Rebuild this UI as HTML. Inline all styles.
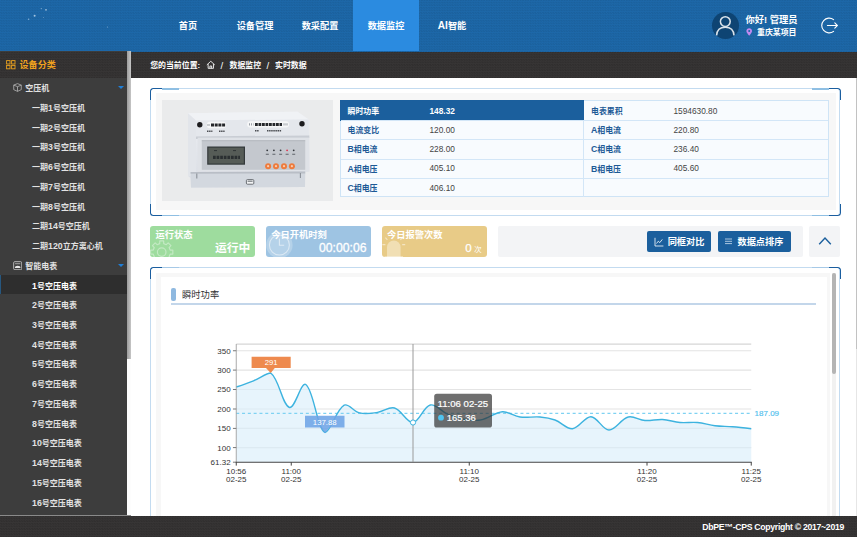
<!DOCTYPE html>
<html lang="zh">
<head>
<meta charset="utf-8">
<title>数据监控</title>
<style>
*{box-sizing:border-box;margin:0;padding:0}
html,body{width:857px;height:537px;overflow:hidden;background:#fff}
body{position:relative;font-family:"Liberation Sans","Noto Sans CJK SC",sans-serif;font-size:8px;color:#333;line-height:1}
.abs{position:absolute}
.dots{background-image:conic-gradient(rgba(0,0,0,.13) 25%,transparent 0 50%,rgba(0,0,0,.13) 0 75%,transparent 0);background-size:2.6px 2.6px}
.dots2{background-image:conic-gradient(rgba(0,0,0,.07) 25%,transparent 0 50%,rgba(0,0,0,.07) 0 75%,transparent 0);background-size:2.6px 2.6px}
/* header */
#hdr{left:0;top:0;width:857px;height:51.6px;background-color:#1d68a9}
.nav{top:0;height:51px;line-height:52.6px;text-align:center;color:#fff;font-size:9.2px;font-weight:700}
.nav.on{background:#2b8be0}
/* sidebar */
#side{left:0;top:51px;width:127px;height:465.2px;background:#3d3d3d}
#sideh{left:0;top:51.5px;width:127px;height:26px;background-color:#373535}
#sbar{left:127px;top:51px;width:4px;height:466px;background:#fdfdfd}
#sthumb{left:127px;top:51px;width:3.8px;height:308px;background:linear-gradient(90deg,#9c9c9c,#c6c6c6)}
.si{left:0;width:127px;height:19.75px;line-height:23.4px;color:#e2e2e2;font-size:8px;font-weight:700;white-space:nowrap}
.si.l2{padding-left:32px}
.si.l1{padding-left:25.2px;line-height:24.8px}
.si.on{background:#2e2e2e;color:#fff;box-shadow:inset 1px 0 0 #27577f}
.tri{width:0;height:0;border-left:3px solid transparent;border-right:3px solid transparent;border-top:3.4px solid #1f7fd8}
.L{font-size:1.1em;line-height:0}
/* breadcrumb */
#bc{left:131px;top:51.5px;width:726px;height:26px;background-color:#373535;color:#fff;font-size:7.9px;font-weight:700;line-height:27.6px;white-space:nowrap}

/* panels */
.panel{border:1px solid #c3dbf0;border-radius:3px;background:#fff}
.cn{width:12.4px;height:12px;border:0 solid #1b5e9f}
.cn.tl{border-top-width:1.8px;border-left-width:1.8px;border-top-left-radius:3.5px}
.cn.tr{border-top-width:1.8px;border-right-width:1.8px;border-top-right-radius:3.5px}
.cn.bl{border-bottom-width:1.8px;border-left-width:1.8px;border-bottom-left-radius:3.5px}
.cn.br{border-bottom-width:1.8px;border-right-width:1.8px;border-bottom-right-radius:3.5px}
.md{height:1.7px;width:17px;background:#8fbfe3}
.inner{background:#f7f7f7}
/* table */
#tb{left:340px;top:100px;width:489px;height:97.3px;background:#f8fbfe;border:1px solid #cfe4f6}
.rw{left:0;width:487px;height:1px;background:#d3e6f7}
.tc{font-size:7.9px;line-height:22.2px;height:19.4px;white-space:nowrap}
.tl1{color:#1d5a96;font-weight:700}
.tv{color:#444;font-size:8.3px;margin-top:-1.1px}
/* cards */
.card{top:225.5px;height:31.5px;border-radius:3px;color:#fff;overflow:hidden}
.card .t{position:absolute;left:5.2px;top:5.1px;font-size:9.25px;font-weight:700;white-space:nowrap}
.card .v{position:absolute;right:5.2px;bottom:2.2px;font-size:11.8px;white-space:nowrap}
.btn{top:231px;height:20.5px;background:#1b5f9d;border-radius:2px;color:#fff;font-size:9.2px;font-weight:700;line-height:22px;white-space:nowrap}
/* footer */
#ft{left:0;top:516.2px;width:857px;height:20.8px;background-color:#373535;color:#fff;font-size:8.7px;letter-spacing:-.3px;font-weight:700;line-height:22.4px;text-align:right;padding-right:13px}
</style>
</head>
<body>
<div id="hdr" class="abs dots2"></div>
<svg class="abs" style="left:0;top:0" width="140" height="51" viewBox="0 0 140 51" fill="#cfe3f5"><circle cx="41.3" cy="8.6" r=".7" opacity=".5"/><circle cx="46" cy="9.8" r=".9" opacity=".7"/><circle cx="34.6" cy="15.7" r="1" opacity=".75"/><circle cx="28.6" cy="19.2" r=".8" opacity=".55"/><circle cx="43.4" cy="17.4" r=".5" opacity=".4"/><circle cx="107.5" cy="27" r=".6" opacity=".5"/></svg>
<div class="abs nav" style="left:160px;width:56px">首页</div>
<div class="abs nav" style="left:222px;width:66px">设备管理</div>
<div class="abs nav" style="left:287px;width:66px">数采配置</div>
<div class="abs nav on" style="left:353px;width:66px">数据监控</div>
<div class="abs nav" style="left:419px;width:66px"><span class="L">AI</span>智能</div>

<div class="abs" style="left:712.3px;top:12.2px;width:26.6px;height:26.6px;border-radius:50%;background:#0e4473"></div>
<svg class="abs" style="left:712.3px;top:12.2px" width="26.6" height="26.6" viewBox="0 0 26.6 26.6" fill="none" stroke="#d9e2ea" stroke-width="1.5"><circle cx="13.3" cy="9.6" r="4.9"/><path d="M4.6 23.4C4.9 17.6 8.8 15.2 13.3 15.2C17.8 15.2 21.7 17.6 22 23.4"/></svg>
<div class="abs" style="left:745.5px;top:15.3px;font-size:9.3px;font-weight:700;color:#fff;white-space:nowrap;line-height:10px">你好! 管理员</div>
<div class="abs" style="left:757px;top:29.3px;font-size:7.9px;font-weight:700;color:#fff;white-space:nowrap;line-height:8px">重庆某项目</div>
<svg class="abs" style="left:745.8px;top:28.4px" width="6.4" height="8" viewBox="0 0 6.4 8"><path d="M3.2 0.3C1.5 0.3 0.4 1.5 0.4 3C0.4 4.8 3.2 7.7 3.2 7.7C3.2 7.7 6 4.8 6 3C6 1.5 4.9 0.3 3.2 0.3Z" fill="#c28af0"/><circle cx="3.2" cy="2.9" r="1" fill="#1c65a6"/></svg>
<svg class="abs" style="left:820px;top:16px" width="19" height="19" viewBox="0 0 19 19" fill="none" stroke="#fff" stroke-width="1.1" stroke-linecap="round"><path d="M13.6 3.6A7.4 7.4 0 1 0 13.6 15.4"/><path d="M7.4 9.5H17.4M14.8 6.9L17.4 9.5L14.8 12.1"/></svg>
<div id="side" class="abs"></div>
<div id="sideh" class="abs dots"></div>
<div class="abs si l1" style="top:77.30px">空压机</div>
<div class="abs si l2" style="top:97.03px">一期<span class="L">1</span>号空压机</div>
<div class="abs si l2" style="top:116.75px">一期<span class="L">2</span>号空压机</div>
<div class="abs si l2" style="top:136.47px">一期<span class="L">3</span>号空压机</div>
<div class="abs si l2" style="top:156.20px">一期<span class="L">6</span>号空压机</div>
<div class="abs si l2" style="top:175.93px">一期<span class="L">7</span>号空压机</div>
<div class="abs si l2" style="top:195.65px">一期<span class="L">8</span>号空压机</div>
<div class="abs si l2" style="top:215.38px">二期<span class="L">14</span>号空压机</div>
<div class="abs si l2" style="top:235.10px">二期<span class="L">120</span>立方离心机</div>
<div class="abs si l1" style="top:254.82px">智能电表</div>
<div class="abs si l2 on" style="top:274.55px"><span class="L">1</span>号空压电表</div>
<div class="abs si l2" style="top:294.28px"><span class="L">2</span>号空压电表</div>
<div class="abs si l2" style="top:314.00px"><span class="L">3</span>号空压电表</div>
<div class="abs si l2" style="top:333.73px"><span class="L">4</span>号空压电表</div>
<div class="abs si l2" style="top:353.45px"><span class="L">5</span>号空压电表</div>
<div class="abs si l2" style="top:373.18px"><span class="L">6</span>号空压电表</div>
<div class="abs si l2" style="top:392.90px"><span class="L">7</span>号空压电表</div>
<div class="abs si l2" style="top:412.63px"><span class="L">8</span>号空压电表</div>
<div class="abs si l2" style="top:432.35px"><span class="L">10</span>号空压电表</div>
<div class="abs si l2" style="top:452.08px"><span class="L">14</span>号空压电表</div>
<div class="abs si l2" style="top:471.80px"><span class="L">15</span>号空压电表</div>
<div class="abs si l2" style="top:491.53px"><span class="L">16</span>号空压电表</div>
<div class="abs" style="left:19.5px;top:51px;height:27px;line-height:29.6px;font-size:9.1px;font-weight:700;color:#f0a21e">设备分类</div>
<svg class="abs" style="left:6px;top:60px" width="10" height="10" viewBox="0 0 10 10" fill="none" stroke="#e9a11f" stroke-width="0.9"><rect x="0.6" y="0.6" width="3.4" height="3.4"/><rect x="5.6" y="0.6" width="3.4" height="3.4"/><rect x="0.6" y="5.4" width="3.4" height="3.4"/><rect x="5.6" y="5.4" width="3.4" height="3.4"/></svg>
<svg class="abs" style="left:12.8px;top:82.9px" width="9" height="9" viewBox="0 0 10 10" fill="none" stroke="#b9b9b9" stroke-width="0.85" stroke-linejoin="round"><path d="M5 0.7L9.2 2.3V7.4L5 9.3L0.8 7.4V2.3ZM0.8 2.3L5 4.1L9.2 2.3M5 4.1V9.3"/></svg>
<svg class="abs" style="left:12.6px;top:260.6px" width="9.4" height="9.4" viewBox="0 0 10 10" fill="none" stroke="#c9c9c9" stroke-width="0.9"><rect x="0.7" y="0.7" width="8.6" height="8.6" rx="1.2"/><path d="M2.2 2.9H7.8" stroke-width="0.8"/><path d="M2 7.4A3 2.3 0 0 1 8 7.4Z" fill="#e6e6e6" stroke="none"/></svg>
<div class="abs tri" style="left:117.5px;top:86px"></div>
<div class="abs tri" style="left:117.5px;top:263.7px"></div>
<div id="sbar" class="abs"></div>
<div class="abs" style="left:0;top:515.4px;width:131px;height:1px;background:#8a8a8a"></div>
<div id="sthumb" class="abs"></div>
<div id="bc" class="abs dots"><span style="margin-left:19.2px">您的当前位置:</span>
<svg style="position:absolute;left:75.3px;top:8.8px" width="9.6" height="9.6" viewBox="0 0 9 9" fill="none" stroke="#fff" stroke-width="0.8"><path d="M0.8 4.6 L4.5 1.2 L8.2 4.6 M2 3.8 V7.8 H7 V3.8 M3.7 7.8 V5.6 H5.3 V7.8"/></svg>
<span style="position:absolute;left:89.6px;font-size:9.6px;font-weight:400">/</span><span style="position:absolute;left:98.5px">数据监控</span><span style="position:absolute;left:135.4px;font-size:9.6px;font-weight:400">/</span><span style="position:absolute;left:144px">实时数据</span></div>


<!-- panel 1 -->
<div class="abs panel" style="left:150.2px;top:88.2px;width:690.3px;height:127.5px"></div>
<div class="abs cn tl" style="left:149.7px;top:87.7px"></div><div class="abs md" style="left:162px;top:87.9px"></div>
<div class="abs cn tr" style="left:828.7px;top:87.7px"></div><div class="abs md" style="left:811.7px;top:87.9px"></div>
<div class="abs cn bl" style="left:149.7px;top:204.2px"></div><div class="abs md" style="left:162px;top:214.6px"></div>
<div class="abs cn br" style="left:828.7px;top:204.2px"></div><div class="abs md" style="left:811.7px;top:214.6px"></div>
<div class="abs inner" style="left:156px;top:93.4px;width:679.7px;height:116.6px"></div>
<div class="abs" style="left:162px;top:100px;width:170.8px;height:100.5px;background:#eaebec"></div>
<svg class="abs" style="left:162px;top:100px" width="172" height="100.5" viewBox="162 100 172 100.5">
<defs><linearGradient id="g1" x1="0" y1="0" x2="0" y2="1"><stop offset="0" stop-color="#eef0f4"/><stop offset="1" stop-color="#d9dde4"/></linearGradient></defs>
<path d="M188 113.2 L297.5 111.8 L308.6 119.4 L309.4 137 L309.4 171.5 L305.2 172 L305 187 L191 187.4 L190.6 178 L188 176 Z" fill="url(#g1)"/>
<path d="M188 113.2 L297.5 111.8 L308.6 119.4 L196 120.4 Z" fill="#f0f2f5"/>
<path d="M188 113.2 L196 120.4 L196 176 L188 176 Z" fill="#e2e5ea"/>
<path d="M196 120.4 L308.6 119.4 L309 136.6 L196 137.6 Z" fill="#e4e7ec"/>
<path d="M196 136.4 L309.3 135.4 L309.3 138 L196 139 Z" fill="#c9cdd4"/>
<rect x="197.6" y="137.6" width="111.6" height="34" fill="#dfe2e7"/>
<rect x="201.8" y="140.2" width="103.4" height="29.6" fill="#c4c8ce"/>
<path d="M201.8 140.2H305.2V141.2H201.8Z" fill="#b3b7be"/>
<rect x="207.2" y="146.5" width="37.8" height="18.2" fill="#33383a"/>
<rect x="208.4" y="147.7" width="35.4" height="15.8" fill="#565c57"/>
<path d="M213 157.4H240" stroke="#2a2f31" stroke-width="3.4" stroke-dasharray="2.7 .9"/>
<path d="M214 150.6H217M233 150.6H236" stroke="#2f3436" stroke-width="1"/>
<path d="M190.6 172 L305.2 171.6 L305 187 L191 187.4 Z" fill="#d3d8df"/>
<path d="M190.6 172 L305.2 171.6 L305.2 173.4 L190.6 173.8Z" fill="#b9bec6"/>
<circle cx="199.8" cy="124.8" r="2.7" fill="#1c1c1e"/><circle cx="302" cy="123.8" r="2.7" fill="#1c1c1e"/>
<rect x="206.8" y="121.8" width="19.4" height="6.4" rx="3" fill="#f6f7f8"/>
<rect x="247.2" y="121.2" width="41.8" height="6.4" rx="3" fill="#f6f7f8"/>
<path d="M211 125H225.4" stroke="#25272b" stroke-width="3" stroke-dasharray="3 .7"/>
<path d="M255 124.4H282" stroke="#25272b" stroke-width="3" stroke-dasharray="2.8 .7"/>
<path d="M207.5 125H210M249 124.4H253.5M283.5 124.4H288" stroke="#9ca1a8" stroke-width="2.2" stroke-dasharray="1 1"/>
<path d="M207 131.2H212.4M219 131.2H224.6M255 130.8H259M267 130.8H281.6" stroke="#4a4d52" stroke-width="1.5" stroke-dasharray="1.5 .6"/>
<g fill="#34373c"><circle cx="267.2" cy="150.3" r=".9"/><circle cx="273.9" cy="150.3" r=".9"/><circle cx="280.6" cy="150.3" r=".9"/><circle cx="287.1" cy="150.3" r=".9" fill="#e2304c"/><circle cx="293.7" cy="150.3" r=".9"/></g>
<path d="M265.8 154.2H268.8M272.4 154.2H275.4M279.1 154.2H282.1M285.6 154.2H288.6M292.2 154.2H295.2" stroke="#5f646b" stroke-width="1.1"/>
<g fill="#ee7b3c"><circle cx="268.1" cy="166.2" r="3"/><circle cx="276" cy="166.2" r="3"/><circle cx="284" cy="166.2" r="3"/><circle cx="291.9" cy="166.2" r="3"/></g>
<g fill="#f9cdb0"><circle cx="268.1" cy="166.2" r="1.1"/><circle cx="276" cy="166.2" r="1.1"/><circle cx="284" cy="166.2" r="1.1"/><circle cx="291.9" cy="166.2" r="1.1"/></g>
<rect x="246.4" y="179.6" width="7.4" height="4.6" rx="1" fill="#f4f5f6" stroke="#4d5258" stroke-width=".8"/>
<path d="M247.6 181.2H252.6" stroke="#4d5258" stroke-width=".9"/>
<path d="M196.8 173.6V178.6M300.4 173V178" stroke="#8b9098" stroke-width="1.1"/>
</svg>
<div id="tb" class="abs">
<div class="abs" style="left:-1px;top:-1px;width:243.6px;height:20.6px;background:#1b5f9d"></div>
<div class="abs rw" style="top:19.2px"></div><div class="abs rw" style="top:38.4px"></div><div class="abs rw" style="top:57.6px"></div><div class="abs rw" style="top:76.9px"></div>
<div class="abs" style="left:242.2px;top:19px;width:1px;height:77px;background:#d3e6f7"></div>
<div class="abs tc tl1" style="left:6.5px;top:-0.4px;color:#fff">瞬时功率</div><div class="abs tc tv" style="left:88.5px;top:-0.4px;color:#fff;font-weight:700">148.32</div>
<div class="abs tc tl1" style="left:6.5px;top:19px">电流变比</div><div class="abs tc tv" style="left:88.5px;top:19px">120.00</div>
<div class="abs tc tl1" style="left:6.5px;top:38.2px"><span class="L">B</span>相电流</div><div class="abs tc tv" style="left:88.5px;top:38.2px">228.00</div>
<div class="abs tc tl1" style="left:6.5px;top:57.5px"><span class="L">A</span>相电压</div><div class="abs tc tv" style="left:88.5px;top:57.5px">405.10</div>
<div class="abs tc tl1" style="left:6.5px;top:76.8px"><span class="L">C</span>相电压</div><div class="abs tc tv" style="left:88.5px;top:76.8px">406.10</div>
<div class="abs tc tl1" style="left:250px;top:-0.4px">电表累积</div><div class="abs tc tv" style="left:332.5px;top:-0.4px">1594630.80</div>
<div class="abs tc tl1" style="left:250px;top:19px"><span class="L">A</span>相电流</div><div class="abs tc tv" style="left:332.5px;top:19px">220.80</div>
<div class="abs tc tl1" style="left:250px;top:38.2px"><span class="L">C</span>相电流</div><div class="abs tc tv" style="left:332.5px;top:38.2px">236.40</div>
<div class="abs tc tl1" style="left:250px;top:57.5px"><span class="L">B</span>相电压</div><div class="abs tc tv" style="left:332.5px;top:57.5px">405.60</div>
</div>
<!-- cards -->
<div class="abs card" style="left:150.3px;width:105.2px;background:#9edc9e"><svg class="abs" style="left:0;top:0" width="40" height="31.5" viewBox="0 0 40 31.5" fill="none" stroke="#fff" stroke-opacity=".38" stroke-width="1.2" stroke-linejoin="round"><path d="M22.83 24.16 L22.83 28.04 L20.16 28.13 L19.12 30.65 L20.95 32.60 L18.20 35.35 L16.25 33.52 L13.73 34.56 L13.64 37.23 L9.76 37.23 L9.67 34.56 L7.15 33.52 L5.20 35.35 L2.45 32.60 L4.28 30.65 L3.24 28.13 L0.57 28.04 L0.57 24.16 L3.24 24.07 L4.28 21.55 L2.45 19.60 L5.20 16.85 L7.15 18.68 L9.67 17.64 L9.76 14.97 L13.64 14.97 L13.73 17.64 L16.25 18.68 L18.20 16.85 L20.95 19.60 L19.12 21.55 L20.16 24.07Z"/><circle cx="11.7" cy="26.1" r="4.3"/></svg><span class="t">运行状态</span><span class="v" style="font-weight:700">运行中</span></div>
<div class="abs card" style="left:266px;width:105.3px;background:#9ec4e3"><svg class="abs" style="left:0;top:0" width="40" height="31.5" viewBox="0 0 40 31.5" fill="none"><circle cx="13.4" cy="19" r="13.2" fill="#fff" fill-opacity=".24"/><circle cx="13.4" cy="19" r="10" stroke="#fff" stroke-opacity=".5" stroke-width="1.1"/><path d="M13.4 12.5V19.3H18.2" stroke="#fff" stroke-opacity=".55" stroke-width="1.1"/></svg><span class="t">今日开机时刻</span><span class="v" style="font-size:12.2px;bottom:2.5px;right:4.8px;-webkit-text-stroke:.3px #fff">00:00:06</span></div>
<div class="abs card" style="left:381.9px;width:105px;background:#e8cb87"><svg class="abs" style="left:0;top:0" width="40" height="31.5" viewBox="0 0 40 31.5" fill="none"><path d="M5 31.5V21.2A6.8 6.8 0 0 1 18.6 21.2V31.5Z" fill="#fff" fill-opacity=".38"/><path d="M2.6 30.8H21M0.4 18.6H3.4M20.2 18.6H23.2M3.4 11.6L5.4 13.8M20.4 11.6L18.4 13.8" stroke="#fff" stroke-opacity=".5" stroke-width="1.1"/></svg><span class="t">今日报警次数</span><span class="v" style="font-size:11.6px;right:5.2px;bottom:3.6px;-webkit-text-stroke:.25px #fff">0<span style="font-size:7.4px;margin-left:2.6px;-webkit-text-stroke:0">次</span></span></div>
<div class="abs" style="left:498px;top:225.5px;width:304.7px;height:31.5px;background:#f3f4f6;border-radius:2px"></div>
<div class="abs btn" style="left:647.2px;width:63.6px;padding-left:20.5px">同框对比</div>
<div class="abs btn" style="left:718px;width:72.8px;padding-left:19.5px">数据点排序</div>
<div class="abs" style="left:809.3px;top:225.5px;width:31px;height:31.5px;background:#f3f4f6;border-radius:2px"></div>
<svg class="abs" style="left:818px;top:236px" width="14" height="10" viewBox="0 0 14 10" fill="none" stroke="#1b5f9d" stroke-width="1.4"><path d="M1.2 8.2 L7 2 L12.8 8.2"/></svg>
<svg class="abs" style="left:653.5px;top:236.5px" width="10" height="10" viewBox="0 0 10 10" fill="none" stroke="#fff" stroke-width="0.8"><path d="M1 0.8V9H9.4M2.5 6.5L4.3 4.2L5.8 5.6L8.3 2.4"/></svg>
<svg class="abs" style="left:723.5px;top:237px" width="9" height="9" viewBox="0 0 9 9" fill="none" stroke="#cfe0f0" stroke-width="0.8"><path d="M1 2H8M1 4.3H8M1 6.6H8"/></svg>
<!-- panel 2 -->
<div class="abs panel" style="left:150.2px;top:267.2px;width:690.3px;height:260px;border-bottom:0"></div>
<div class="abs cn tl" style="left:149.7px;top:266.7px"></div><div class="abs md" style="left:162px;top:266.9px;background:#a6c9e7;height:1.4px"></div>
<div class="abs cn tr" style="left:828.7px;top:266.7px"></div><div class="abs md" style="left:811.7px;top:266.9px;background:#a6c9e7;height:1.4px"></div>
<div class="abs inner" style="left:155.7px;top:272.7px;width:674px;height:250px"></div>
<div class="abs" style="left:161px;top:277.4px;width:665.8px;height:245px;background:#fff"></div>
<div class="abs" style="left:832px;top:273px;width:3.6px;height:250px;background:#f1f1f1"></div>
<div class="abs" style="left:831.7px;top:273px;width:3.9px;height:101px;background:#b4b4b4;border-radius:2px"></div>
<div class="abs" style="left:171.3px;top:288px;width:4.3px;height:12.6px;border-radius:2px;background:#8fb9e0"></div>
<div class="abs" style="left:182px;top:289.5px;font-size:9.3px;line-height:10px;color:#333">瞬时功率</div>
<div class="abs" style="left:171.3px;top:303.4px;width:644.6px;height:1.4px;background:#c3d6ea"></div>
<!--CHART_S--><svg class="abs" style="left:0;top:0" width="857" height="537" viewBox="0 0 857 537" font-family="Liberation Sans, sans-serif">
<path d="M236.25 344.1H751.25" stroke="#ccc" stroke-width="1" fill="none"/>
<path d="M236.25 350.75H751.25M236.25 370.1H751.25M236.25 389.5H751.25M236.25 409H751.25M236.25 428.4H751.25M236.25 447.6H751.25" stroke="#e4e4e4" stroke-width="1.1" fill="none"/>
<path d="M236.25 387.00 C236.25 387.00 247.39 383.28 253.50 380.80 C259.81 378.24 266.53 373.00 270.75 373.00 C279.49 379.49 282.16 405.09 289.50 407.50 C294.76 409.23 301.24 381.33 305.75 384.50 C314.02 390.33 316.59 427.97 325.00 432.50 C330.43 432.50 335.99 409.86 344.20 405.20 C348.41 402.81 353.66 411.64 359.50 412.90 C365.64 414.23 371.12 413.29 377.50 412.40 C383.72 411.53 389.04 406.45 394.50 408.00 C401.82 410.08 406.70 423.03 413.00 422.50 C419.59 421.95 423.36 406.61 430.30 405.00 C435.96 403.69 441.37 411.65 448.00 414.40 C453.86 416.83 458.76 418.36 465.00 419.40 C470.64 420.34 475.46 421.03 481.00 419.90 C488.96 418.28 494.68 412.33 502.50 411.75 C508.72 411.29 513.56 416.10 520.00 417.00 C527.06 417.99 532.86 416.39 540.00 417.00 C545.46 417.47 549.87 418.14 555.00 420.00 C561.57 422.37 566.41 429.30 572.50 428.75 C579.37 428.13 584.47 416.53 591.00 416.75 C597.61 416.98 602.42 429.96 609.00 430.00 C615.83 430.05 620.79 418.97 628.25 417.00 C633.75 415.55 638.91 420.06 645.00 420.50 C651.24 420.96 656.24 419.14 662.50 419.50 C668.84 419.86 673.65 421.96 680.00 422.50 C686.25 423.04 691.25 421.92 697.50 422.50 C703.85 423.09 708.65 424.98 715.00 425.75 C721.25 426.51 726.21 426.23 732.50 426.75 C739.26 427.31 751.25 428.75 751.25 428.75 L751.25 462.2 L236.25 462.2 Z" fill="#d8eefa" fill-opacity="0.62"/>
<path d="M236.25 413.4H751.25" stroke="#7fd2f2" stroke-width="1.1" stroke-dasharray="3 2.8" fill="none"/>
<path d="M236.25 387.00 C236.25 387.00 247.39 383.28 253.50 380.80 C259.81 378.24 266.53 373.00 270.75 373.00 C279.49 379.49 282.16 405.09 289.50 407.50 C294.76 409.23 301.24 381.33 305.75 384.50 C314.02 390.33 316.59 427.97 325.00 432.50 C330.43 432.50 335.99 409.86 344.20 405.20 C348.41 402.81 353.66 411.64 359.50 412.90 C365.64 414.23 371.12 413.29 377.50 412.40 C383.72 411.53 389.04 406.45 394.50 408.00 C401.82 410.08 406.70 423.03 413.00 422.50 C419.59 421.95 423.36 406.61 430.30 405.00 C435.96 403.69 441.37 411.65 448.00 414.40 C453.86 416.83 458.76 418.36 465.00 419.40 C470.64 420.34 475.46 421.03 481.00 419.90 C488.96 418.28 494.68 412.33 502.50 411.75 C508.72 411.29 513.56 416.10 520.00 417.00 C527.06 417.99 532.86 416.39 540.00 417.00 C545.46 417.47 549.87 418.14 555.00 420.00 C561.57 422.37 566.41 429.30 572.50 428.75 C579.37 428.13 584.47 416.53 591.00 416.75 C597.61 416.98 602.42 429.96 609.00 430.00 C615.83 430.05 620.79 418.97 628.25 417.00 C633.75 415.55 638.91 420.06 645.00 420.50 C651.24 420.96 656.24 419.14 662.50 419.50 C668.84 419.86 673.65 421.96 680.00 422.50 C686.25 423.04 691.25 421.92 697.50 422.50 C703.85 423.09 708.65 424.98 715.00 425.75 C721.25 426.51 726.21 426.23 732.50 426.75 C739.26 427.31 751.25 428.75 751.25 428.75" stroke="#3db3df" stroke-width="1.4" fill="none" stroke-linejoin="round"/>
<path d="M236.25 344V462.2" stroke="#a0a0a0" stroke-width="0.9" fill="none"/>
<path d="M232.95 350.75H236.25M232.95 370.1H236.25M232.95 389.5H236.25M232.95 409H236.25M232.95 428.4H236.25M232.95 447.6H236.25M232.95 462.2H236.25" stroke="#777" stroke-width="1" fill="none"/>
<path d="M235.75 462.2H751.75" stroke="#444" stroke-width="1.1" fill="none"/>
<path d="M236.25 462.2V465.6M291.25 462.2V465.6M469.25 462.2V465.6M647 462.2V465.6M751.25 462.2V465.6" stroke="#444" stroke-width="1" fill="none"/>
<text x="230.6" y="353.6" font-size="8" fill="#333" text-anchor="end">350</text>
<text x="230.6" y="373.0" font-size="8" fill="#333" text-anchor="end">300</text>
<text x="230.6" y="392.4" font-size="8" fill="#333" text-anchor="end">250</text>
<text x="230.6" y="411.9" font-size="8" fill="#333" text-anchor="end">200</text>
<text x="230.6" y="431.3" font-size="8" fill="#333" text-anchor="end">150</text>
<text x="230.6" y="450.5" font-size="8" fill="#333" text-anchor="end">100</text>
<text x="230.6" y="465.1" font-size="8" fill="#333" text-anchor="end">61.32</text>
<text x="236.25" y="474.1" font-size="8" fill="#333" text-anchor="middle">10:56</text>
<text x="236.25" y="482.4" font-size="8" fill="#333" text-anchor="middle">02-25</text>
<text x="291.25" y="474.1" font-size="8" fill="#333" text-anchor="middle">11:00</text>
<text x="291.25" y="482.4" font-size="8" fill="#333" text-anchor="middle">02-25</text>
<text x="469.25" y="474.1" font-size="8" fill="#333" text-anchor="middle">11:10</text>
<text x="469.25" y="482.4" font-size="8" fill="#333" text-anchor="middle">02-25</text>
<text x="647" y="474.1" font-size="8" fill="#333" text-anchor="middle">11:20</text>
<text x="647" y="482.4" font-size="8" fill="#333" text-anchor="middle">02-25</text>
<text x="751.25" y="474.1" font-size="8" fill="#333" text-anchor="middle">11:25</text>
<text x="751.25" y="482.4" font-size="8" fill="#333" text-anchor="middle">02-25</text>
<text x="754.6" y="416.2" font-size="8" fill="#4fc0ee" stroke="#4fc0ee" stroke-width=".15">187.09</text>
<path d="M251.6 356.7H290.7V368.1H274.8L270.7 373L266 368.1H251.6Z" fill="#ee8a4e"/>
<text x="271.2" y="365.2" font-size="7.8" fill="#fff" text-anchor="middle">291</text>
<path d="M305 415.8H344.5V427.5H329.6L325 433L320.4 427.5H305Z" fill="#6ea4e6" fill-opacity=".88"/>
<text x="324.8" y="424.5" font-size="7.8" fill="#fff" text-anchor="middle">137.88</text>
<path d="M413 344V462" stroke="#9a9a9a" stroke-width="1" fill="none"/>
<circle cx="413" cy="422.5" r="2.6" fill="#fff" stroke="#3db3df" stroke-width="1"/>
<rect x="434.2" y="393.8" width="57.8" height="33.7" rx="2.6" fill="#323232" fill-opacity="0.7"/>
<text x="437.6" y="407" font-size="9.6" fill="#fff" stroke="#fff" stroke-width=".2">11:06 02-25</text>
<circle cx="441" cy="417.7" r="2.9" fill="#4fc3ef"/>
<text x="446.8" y="421.1" font-size="9.5" fill="#fff" stroke="#fff" stroke-width=".2">165.36</text>
</svg><!--CHART_E-->
<!-- right edge line -->
<div class="abs" style="left:856px;top:78px;width:1px;height:439px;background:#e6e6e6"></div>
<div class="abs" style="left:856px;top:78px;width:1px;height:271px;background:#c2c2c2"></div>
<div id="ft" class="abs dots">DbPE™-CPS Copyright © 2017~2019</div>
</body>
</html>
